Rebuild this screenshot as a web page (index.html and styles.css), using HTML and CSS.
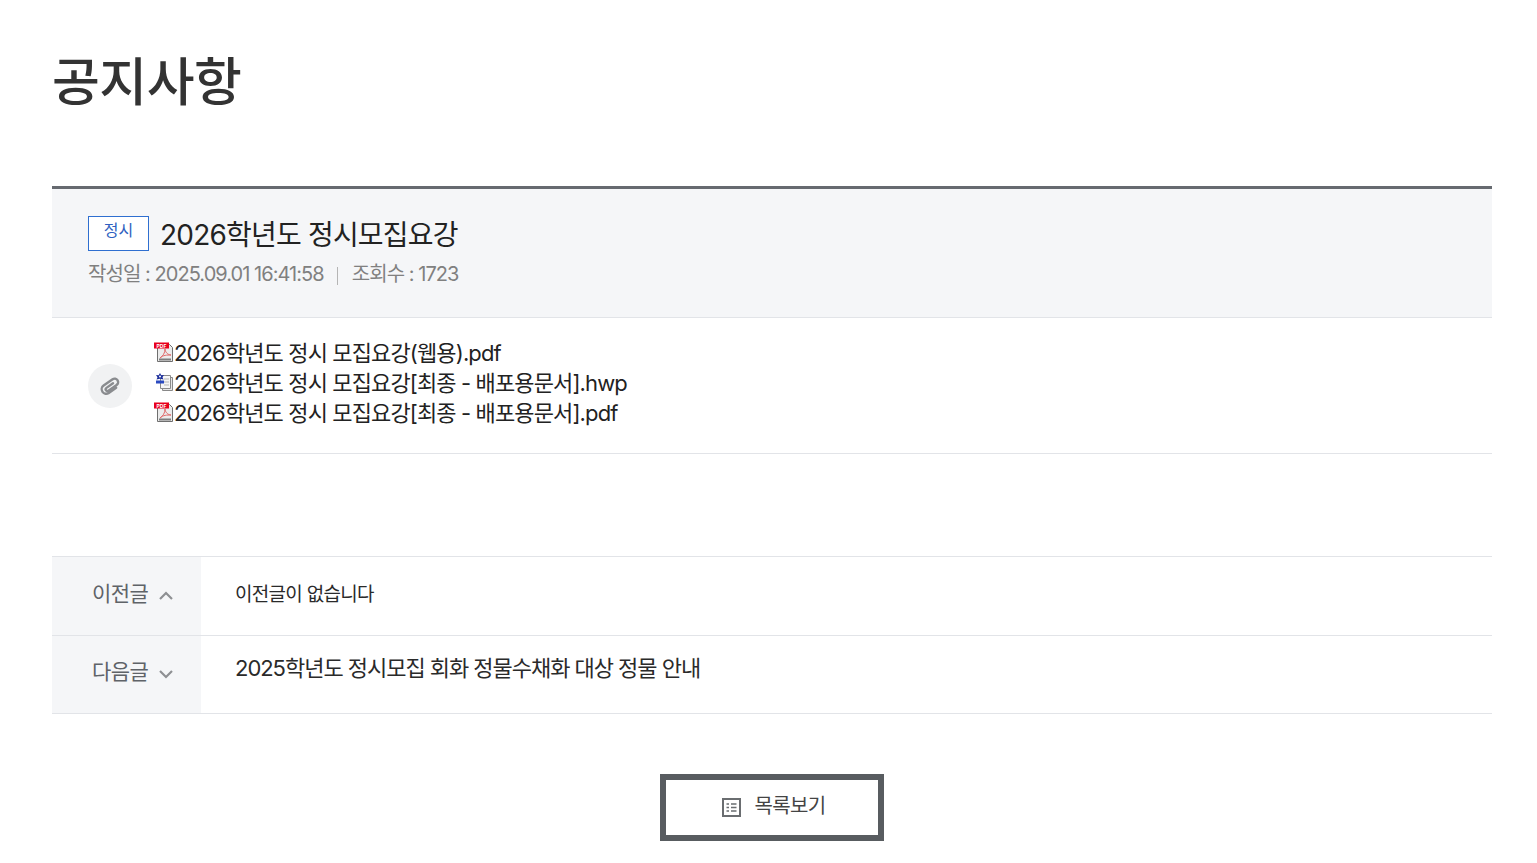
FILE: index.html
```html
<!DOCTYPE html>
<html lang="ko">
  <head>
    <meta charset="UTF-8" />
    <title>공지사항</title>
    <link rel="stylesheet" href="styles.css">
  </head>
  <body>
    <main class="wrap">
      <h1 class="page-title">공지사항</h1>

      <section class="view-head">
        <div class="view-title">
          <span class="tag">정시</span>
          <h2>2026학년도 정시모집요강</h2>
        </div>
        <div class="view-meta">
          <span>작성일 : 2025.09.01 16:41:58</span>
          <i class="sep"></i>
          <span>조회수 : 1723</span>
        </div>
      </section>

      <section class="files">
        <span class="clip">
          <svg width="24" height="24" viewBox="0 0 24 24" fill="none" stroke="#8a8c8f" stroke-width="2.400" stroke-linecap="round">
            <path transform="translate(12 12) rotate(55)" d="M-0.500 -4V4a1.750 1.750 0 0 0 3.500 0V-6a3.500 3.500 0 0 0 -7 0V5a4.500 4.500 0 0 0 9 0V-4"/>
          </svg>
        </span>
        <ul class="file-list">
          <li>
            <svg class="ficon" width="21" height="21" viewBox="0 0 21 21">
              <path d="M3.500 2.500h12l3 3v14h-15z" fill="#ececec" stroke="#6f6f6f"/>
              <path d="M6 16c3-2 5-5 5-9 0 3 3 6 6 6-4 0-8 0-11 3z" fill="none" stroke="#e06a6a"/>
              <rect x="5" y="16.500" width="12" height="2" fill="#7d7d7d"/>
              <rect x="0" y="0.500" width="15" height="6" fill="#e8001c"/>
              <text class="pdf-mark" x="7.500" y="5.500">PDF</text>
            </svg>
            <a href="#">2026학년도 정시 모집요강(웹용).pdf</a>
          </li>
          <li>
            <svg class="ficon" width="21" height="21" viewBox="0 0 21 21">
              <path d="M8.500 5.500h10v13h-10z" fill="#e6e6e6" stroke="#888"/>
              <path d="M6.500 3.500h10v13h-10z" fill="#f6f6f6" stroke="#8a8a8a"/>
              <path d="M10 7h5M10 10h5M10 13h5" stroke="#b5b5b5"/>
              <path d="M6 1l1.300 2.200L10 3 8.500 5.200l1 2.300L6 6.700l-3.500.8 1-2.300L2 3l2.700.2z" fill="#1d2f9c"/>
              <circle cx="6" cy="4.500" r="1" fill="#fff"/>
              <rect x="2" y="8.500" width="8" height="3" fill="#2b4ac0"/>
            </svg>
            <a href="#">2026학년도 정시 모집요강[최종 - 배포용문서].hwp</a>
          </li>
          <li>
            <svg class="ficon" width="21" height="21" viewBox="0 0 21 21">
              <path d="M3.500 2.500h12l3 3v14h-15z" fill="#ececec" stroke="#6f6f6f"/>
              <path d="M6 16c3-2 5-5 5-9 0 3 3 6 6 6-4 0-8 0-11 3z" fill="none" stroke="#e06a6a"/>
              <rect x="5" y="16.500" width="12" height="2" fill="#7d7d7d"/>
              <rect x="0" y="0.500" width="15" height="6" fill="#e8001c"/>
              <text class="pdf-mark" x="7.500" y="5.500">PDF</text>
            </svg>
            <a href="#">2026학년도 정시 모집요강[최종 - 배포용문서].pdf</a>
          </li>
        </ul>
      </section>

      <section class="pager">
        <div class="pager-row">
          <div class="pager-label">
            <span class="label-up">이전글</span>
            <svg width="16" height="10" viewBox="0 0 16 10" fill="none" stroke="#8e9093" stroke-width="2.200"><path d="M2 8l6-6 6 6"/></svg>
          </div>
          <div class="pager-text pager-none">이전글이 없습니다</div>
        </div>
        <div class="pager-row">
          <div class="pager-label">
            <span class="label-up">다음글</span>
            <svg width="16" height="10" viewBox="0 0 16 10" fill="none" stroke="#8e9093" stroke-width="2.200"><path d="M2 2l6 6 6-6"/></svg>
          </div>
          <div class="pager-text pager-next">2025학년도 정시모집 회화 정물수채화 대상 정물 안내</div>
        </div>
      </section>

      <div class="actions">
        <a class="btn-list" href="#">
          <svg width="19" height="19" viewBox="0 0 19 19" fill="none" stroke="#6a6d70" stroke-width="2">
            <rect x="1" y="1" width="17" height="17"/>
            <path d="M4.500 6h2.500M9 6h5.500M4.500 9.500h2.500M9 9.500h5.500M4.500 13h2.500M9 13h5.500" stroke-width="1.700"/>
          </svg>
          <span class="btn-label">목록보기</span>
        </a>
      </div>
    </main>
  </body>
</html>
```

FILE: styles.css
```css
* {
  box-sizing: border-box;
}
body {
  margin: 0;
  background: #ffffff;
  color: #222;
  font-family: Inter, "Noto Sans CJK KR", sans-serif;
}
.wrap {
  width: 1440px;
  margin-left: 52px;
}
.page-title {
  margin: 0;
  padding-top: 52px;
  height: 186px;
  font-size: 52px;
  line-height: 62px;
  font-weight: 500;
  letter-spacing: -0.5px;
  color: #333;
}
.view-head {
  height: 132px;
  padding: 27px 36px 0;
  background: #f5f6f8;
  border-top: 3px solid #666a70;
  border-bottom: 1px solid #e2e4e8;
}
.view-title {
  display: flex;
  align-items: flex-start;
  gap: 11px;
}
.view-title h2 {
  margin: 0;
  font-size: 28px;
  line-height: 38px;
  font-weight: 400;
  letter-spacing: -0.8px;
  color: #222;
}
.tag {
  width: 61px;
  height: 35px;
  border: 1px solid #2f6fd0;
  background: #fff;
  color: #2f5fc0;
  font-size: 16px;
  line-height: 27px;
  text-align: center;
}
.view-meta {
  display: flex;
  align-items: center;
  margin-top: 5px;
  font-size: 20px;
  line-height: 30px;
  letter-spacing: -0.95px;
  color: #808080;
}
.sep {
  width: 1px;
  height: 18px;
  margin: 4px 14px 0 13px;
  background: #b5b5b5;
}
.files {
  display: flex;
  align-items: center;
  height: 136px;
  padding: 0 36px;
  border-bottom: 1px solid #e2e4e8;
}
.clip {
  display: flex;
  align-items: center;
  justify-content: center;
  width: 44px;
  height: 44px;
  margin-right: 22px;
  border-radius: 50%;
  background: #f1f2f3;
}
.file-list {
  margin: 0 0 10px;
  padding: 0;
  list-style: none;
}
.file-list li {
  display: flex;
  align-items: center;
  height: 30px;
  font-size: 22px;
  letter-spacing: -0.87px;
}
.file-list a {
  color: #222;
  text-decoration: none;
}
.ficon {
  flex: none;
  margin: 3px -1px 0 0;
}
.pdf-mark {
  fill: #fff;
  font-size: 5px;
  font-weight: 700;
  letter-spacing: 0;
  text-anchor: middle;
}
.pager {
  margin-top: 102px;
  border-top: 1px solid #e2e4e8;
}
.pager-row {
  display: flex;
  height: 78.5px;
  border-bottom: 1px solid #e2e4e8;
}
.pager-label {
  display: flex;
  align-items: center;
  gap: 10px;
  width: 149px;
  padding-left: 40px;
  background: #f5f6f8;
  font-size: 21px;
  letter-spacing: -0.6px;
  color: #5f6368;
}
.label-up {
  margin-bottom: 8px;
}
.pager-text {
  padding-left: 34px;
  color: #2a2a2a;
}
.pager-none {
  padding-top: 23px;
  font-size: 19px;
  line-height: 30px;
  letter-spacing: -0.7px;
}
.pager-next {
  padding-top: 17px;
  font-size: 22px;
  line-height: 30px;
  letter-spacing: -1.03px;
}
.actions {
  display: flex;
  justify-content: center;
  margin-top: 60px;
}
.btn-list {
  display: flex;
  align-items: center;
  justify-content: center;
  gap: 13px;
  width: 224px;
  height: 67px;
  padding-left: 4px;
  border: 6px solid #585c60;
  font-size: 20px;
  letter-spacing: -0.6px;
  color: #444;
  text-decoration: none;
}
.btn-label {
  margin-bottom: 6px;
}
```
